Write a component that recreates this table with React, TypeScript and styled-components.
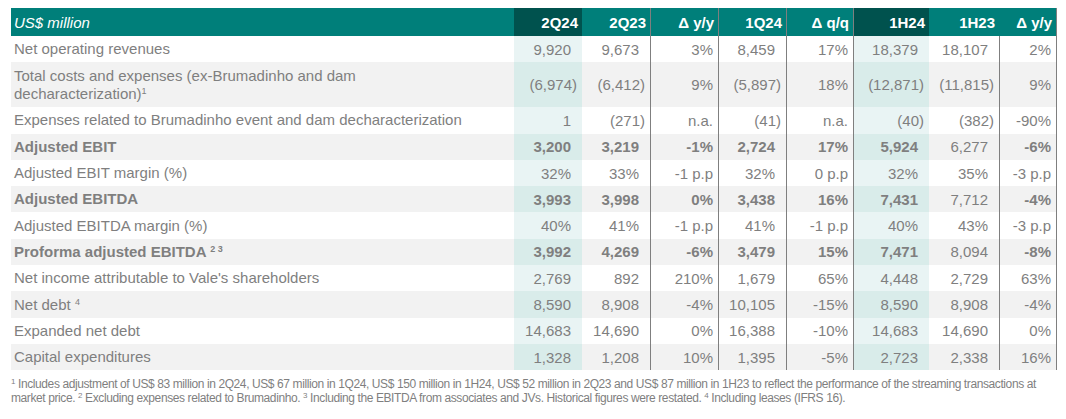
import React from "react";
import styled, { createGlobalStyle, css } from "styled-components";

const GlobalStyle = createGlobalStyle`
  html, body {
    margin: 0;
    background: #fff;
  }
  body {
    padding: 8px 0 0 11px;
    font-family: "Liberation Sans", Arial, sans-serif;
  }
`;

const COLS = "503px 68px 68px 68px 68px 67px 76px 70px 57px";

const Table = styled.div`
  width: 1046px;
  display: flex;
  flex-direction: column;
`;

const HeadRow = styled.div`
  display: grid;
  grid-template-columns: ${COLS} 1px;
  height: 28px;
  background: #007f7a;
  color: #fff;
  font-size: 15px;
`;

const HeadCell = styled.div<{ $dark?: boolean; $line?: boolean; $label?: boolean }>`
  display: flex;
  align-items: center;
  justify-content: ${(p) => (p.$label ? "flex-start" : "flex-end")};
  padding: ${(p) => (p.$label ? "0 0 0 3px" : "0 4px 0 0")};
  font-weight: ${(p) => (p.$label ? 400 : 700)};
  font-style: ${(p) => (p.$label ? "italic" : "normal")};
  background: ${(p) => (p.$dark ? "#00524e" : "transparent")};
  border-left: ${(p) => (p.$line ? "1px solid #7f7f7f" : "none")};
  box-sizing: border-box;
`;

const Row = styled.div<{ $alt?: boolean; $tall?: boolean }>`
  display: grid;
  grid-template-columns: ${COLS} 1px;
  height: ${(p) => (p.$tall ? "45px" : "26.3px")};
  background: ${(p) => (p.$alt ? "#f2f2f2" : "#fff")};
  --hl: ${(p) => (p.$alt ? "#d9ecea" : "#e9f4f4")};
  color: #7f7f7f;
  font-size: 15px;
`;

const Label = styled.div<{ $bold?: boolean }>`
  display: flex;
  align-items: center;
  padding-left: 3px;
  font-weight: ${(p) => (p.$bold ? 700 : 400)};
  line-height: 18px;
  sup {
    font-size: 9px;
    vertical-align: top;
    line-height: 12px;
  }
`;

const Cell = styled.div<{ $hl?: boolean; $line?: boolean; $bold?: boolean; $pad: number }>`
  display: flex;
  align-items: center;
  justify-content: flex-end;
  padding-right: ${(p) => p.$pad}px;
  font-weight: ${(p) => (p.$bold ? 700 : 400)};
  box-sizing: border-box;
  white-space: nowrap;
  ${(p) =>
    p.$hl &&
    css`
      background: var(--hl);
    `}
  border-left: ${(p) => (p.$line ? "1px solid #7f7f7f" : "none")};
`;

const Edge = styled.div`
  background: #7f7f7f;
`;

const Notes = styled.div`
  margin-top: 7px;
  width: 1046px;
  color: #7f7f7f;
  font-family: "Liberation Sans", Arial, sans-serif;
  font-size: 12px;
  letter-spacing: -0.4px;
  line-height: 14px;
  white-space: nowrap;
  sup {
    font-size: 8px;
    vertical-align: top;
    line-height: 10px;
  }
`;

type RowData = {
  label: React.ReactNode;
  bold?: boolean;
  tall?: boolean;
  v: string[];
};

const rows: RowData[] = [
  { label: "Net operating revenues", v: ["9,920", "9,673", "3%", "8,459", "17%", "18,379", "18,107", "2%"] },
  {
    label: (
      <span>
        Total costs and expenses (ex-Brumadinho and dam
        <br />
        decharacterization)<sup>1</sup>
      </span>
    ),
    tall: true,
    v: ["(6,974)", "(6,412)", "9%", "(5,897)", "18%", "(12,871)", "(11,815)", "9%"],
  },
  {
    label: "Expenses related to Brumadinho event and dam decharacterization",
    v: ["1", "(271)", "n.a.", "(41)", "n.a.", "(40)", "(382)", "-90%"],
  },
  { label: "Adjusted EBIT", bold: true, v: ["3,200", "3,219", "-1%", "2,724", "17%", "5,924", "6,277", "-6%"] },
  { label: "Adjusted EBIT margin (%)", v: ["32%", "33%", "-1 p.p", "32%", "0 p.p", "32%", "35%", "-3 p.p"] },
  { label: "Adjusted EBITDA", bold: true, v: ["3,993", "3,998", "0%", "3,438", "16%", "7,431", "7,712", "-4%"] },
  { label: "Adjusted EBITDA margin (%)", v: ["40%", "41%", "-1 p.p", "41%", "-1 p.p", "40%", "43%", "-3 p.p"] },
  {
    label: (
      <span>
        Proforma adjusted EBITDA <sup>2 3</sup>
      </span>
    ),
    bold: true,
    v: ["3,992", "4,269", "-6%", "3,479", "15%", "7,471", "8,094", "-8%"],
  },
  {
    label: "Net income attributable to Vale's shareholders",
    v: ["2,769", "892", "210%", "1,679", "65%", "4,448", "2,729", "63%"],
  },
  {
    label: (
      <span>
        Net debt <sup>4</sup>
      </span>
    ),
    v: ["8,590", "8,908", "-4%", "10,105", "-15%", "8,590", "8,908", "-4%"],
  },
  { label: "Expanded net debt", v: ["14,683", "14,690", "0%", "16,388", "-10%", "14,683", "14,690", "0%"] },
  { label: "Capital expenditures", v: ["1,328", "1,208", "10%", "1,395", "-5%", "2,723", "2,338", "16%"] },
];

const heads = ["2Q24", "2Q23", "\u0394 y/y", "1Q24", "\u0394 q/q", "1H24", "1H23", "\u0394 y/y"];
const darkCols = [0, 5];
const deltaCols = [2, 4, 7];
const lineCols = [2, 3, 4, 5, 7];
const headLineCols = [2, 3, 4, 5];

export default function App() {
  return (
    <>
      <GlobalStyle />
      <Table>
        <HeadRow>
          <HeadCell $label>US$ million</HeadCell>
          {heads.map((h, i) => (
            <HeadCell key={i} $dark={darkCols.includes(i)} $line={headLineCols.includes(i)}>
              {h}
            </HeadCell>
          ))}
          <Edge />
        </HeadRow>
        {rows.map((r, ri) => (
          <Row key={ri} $alt={ri % 2 === 1} $tall={r.tall}>
            <Label $bold={r.bold}>{r.label}</Label>
            {r.v.map((val, i) => {
              const isDelta = deltaCols.includes(i);
              const pad = isDelta || val.startsWith("(") ? 5 : 11;
              return (
                <Cell
                  key={i}
                  $pad={pad}
                  $hl={darkCols.includes(i)}
                  $line={lineCols.includes(i)}
                  $bold={r.bold && i !== 6}
                >
                  {val}
                </Cell>
              );
            })}
            <Edge />
          </Row>
        ))}
      </Table>
      <Notes>
        <sup>1</sup> Includes adjustment of US$ 83 million in 2Q24, US$ 67 million in 1Q24, US$ 150 million in 1H24, US$ 52 million
        in 2Q23 and US$ 87 million in 1H23 to reflect the performance of the streaming transactions at
        <br />
        market price. <sup>2</sup> Excluding expenses related to Brumadinho. <sup>3</sup> Including the EBITDA from associates and
        JVs. Historical figures were restated. <sup>4</sup> Including leases (IFRS 16).
      </Notes>
    </>
  );
}
